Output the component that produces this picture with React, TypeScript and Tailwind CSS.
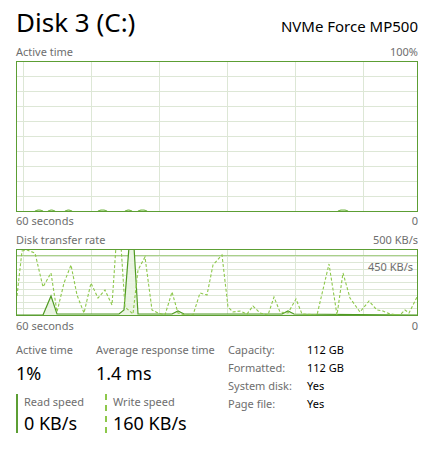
import React from "react"

const writeData: [number, number][] = [
  [17, 296], [22, 251], [27, 250], [35, 253], [43, 287], [51, 273], [57, 312], [64, 283],
  [71, 265], [77, 295], [84, 313], [91, 283], [98, 298], [105, 290], [112, 305], [116, 246],
  [121, 246], [125, 307], [133, 314], [138, 270], [145, 257], [152, 310], [158, 313], [165, 315],
  [172, 292], [178, 313], [185, 315], [193, 315], [200, 293], [207, 295], [213, 265], [222, 255],
  [228, 307], [233, 312], [240, 311], [247, 314], [253, 306], [260, 313], [268, 315], [274, 297],
  [280, 312], [288, 313], [296, 299], [302, 314], [317, 315], [329, 264], [337, 315], [343, 273],
  [350, 298], [360, 312], [369, 301], [377, 310], [383, 311], [390, 314], [400, 315], [405, 310],
  [409, 313], [417, 297],
]

const readData: [number, number][] = [
  [17, 315], [43, 315], [51, 296], [57, 314], [119, 314], [124, 310], [129, 247], [134, 247],
  [138, 314], [172, 314], [178, 311], [184, 314], [282, 314], [288, 311], [294, 314], [417, 315],
]

const activeBlips: [number, number][] = [
  [35, 43], [48, 55], [65, 72], [98, 107], [125, 132], [138, 147], [338, 348],
]

const vLines = [23, 91, 159, 227, 295, 363]

const pts = (d: [number, number][]) => d.map(([x, y]) => `${x},${y}`).join(" ")

function ActiveChart() {
  const hLines = Array.from({ length: 9 }, (_, i) => 61 + 15 * (i + 1))
  return (
    <div className="h-[151px] w-[402px] border border-[#5c9e34] bg-white">
      <svg viewBox="17 62 400 149" className="block h-full w-full" preserveAspectRatio="none">
        {hLines.map((y) => (
          <line key={y} x1={17} x2={417} y1={y + 0.5} y2={y + 0.5} stroke="#dde7d6" strokeWidth={1} />
        ))}
        {vLines.map((x) => (
          <line key={x} x1={x + 0.5} x2={x + 0.5} y1={62} y2={211} stroke="#dde7d6" strokeWidth={1} />
        ))}
        {activeBlips.map(([a, b]) => (
          <polyline
            key={a}
            points={`${a},211 ${a + 3},210 ${b - 3},210 ${b},211`}
            fill="#d7eac4"
            stroke="#77b84a"
            strokeWidth={1.2}
          />
        ))}
      </svg>
    </div>
  )
}

function TransferChart() {
  const hLines = Array.from({ length: 9 }, (_, i) => Math.round(249 + 6.6 * (i + 1)))
  return (
    <div className="relative h-[67px] w-[402px] border border-[#5c9e34] bg-white">
      <svg viewBox="17 250 400 65" className="block h-full w-full" preserveAspectRatio="none">
        {hLines.map((y) => (
          <line key={y} x1={17} x2={417} y1={y + 0.5} y2={y + 0.5} stroke="#dde7d6" strokeWidth={1} />
        ))}
        {vLines.map((x) => (
          <line key={x} x1={x + 0.5} x2={x + 0.5} y1={250} y2={315} stroke="#dde7d6" strokeWidth={1} />
        ))}
        <line x1={17} x2={417} y1={255.5} y2={255.5} stroke="#a9d08a" strokeWidth={1} />
        <polygon points={`${pts(readData)} 417,315 17,315`} fill="#eaf4e2" stroke="none" />
        <polyline points={pts(readData)} fill="none" stroke="#4f9a22" strokeWidth={1.2} />
        <polyline points={pts(writeData)} fill="none" stroke="#8dc84a" strokeWidth={1.1} strokeDasharray="3 2" />
      </svg>
      <span className="absolute right-[4px] top-[10px] text-[11px] leading-[14px] text-[#6e6e6e]">450 KB/s</span>
    </div>
  )
}

function Row({ left, right }: { left: string; right: string }) {
  return (
    <div className="flex h-[14px] w-[402px] items-center justify-between text-[11px] leading-[14px] text-[#6e6e6e]">
      <span>{left}</span>
      <span>{right}</span>
    </div>
  )
}

export default function App() {
  return (
    <div className="h-[474px] w-[440px] bg-white font-['Noto_Sans',sans-serif] text-black">
      <div className="ml-4 w-[402px]">
        <div className="flex h-[42px] items-end justify-between pb-[2px]">
          <span className="text-[26px] leading-[36px]">Disk 3 (C:)</span>
          <span className="mb-[4px] text-[15px] leading-[20px]">NVMe Force MP500</span>
        </div>

        <div className="mt-[3px]">
          <Row left="Active time" right="100%" />
        </div>
        <div className="mt-[2px]">
          <ActiveChart />
        </div>
        <div className="mt-[2px]">
          <Row left="60 seconds" right="0" />
        </div>

        <div className="mt-[5px]">
          <Row left="Disk transfer rate" right="500 KB/s" />
        </div>
        <div className="mt-[2px]">
          <TransferChart />
        </div>
        <div className="mt-[3px]">
          <Row left="60 seconds" right="0" />
        </div>

        <div className="mt-[10px] flex items-start">
          <div className="w-[212px]">
            <div className="flex">
              <div className="w-[80px]">
                <div className="text-[11px] leading-[14px] text-[#6e6e6e]">Active time</div>
                <div className="mt-[5px] text-[18px] leading-[22px]">1%</div>
              </div>
              <div>
                <div className="text-[11px] leading-[14px] text-[#6e6e6e]">Average response time</div>
                <div className="mt-[5px] text-[18px] leading-[22px]">1.4 ms</div>
              </div>
            </div>
            <div className="mt-[10px] flex">
              <div className="flex h-[39px] w-[89px]">
                <div className="w-[2px] bg-[#5c9e34]" />
                <div className="pl-[6px] pt-[1px]">
                  <div className="text-[11px] leading-[14px] text-[#6e6e6e]">Read speed</div>
                  <div className="mt-[3px] text-[18px] leading-[22px]">0 KB/s</div>
                </div>
              </div>
              <div className="flex h-[39px]">
                <div className="w-0 border-l-2 border-dashed border-[#8dc84a]" />
                <div className="pl-[6px] pt-[1px]">
                  <div className="text-[11px] leading-[14px] text-[#6e6e6e]">Write speed</div>
                  <div className="mt-[3px] text-[18px] leading-[22px]">160 KB/s</div>
                </div>
              </div>
            </div>
          </div>

          <div className="grid grid-cols-[79px_auto] content-start gap-y-[4px] text-[11px] leading-[14px]">
            <span className="text-[#6e6e6e]">Capacity:</span>
            <span>112 GB</span>
            <span className="text-[#6e6e6e]">Formatted:</span>
            <span>112 GB</span>
            <span className="text-[#6e6e6e]">System disk:</span>
            <span>Yes</span>
            <span className="text-[#6e6e6e]">Page file:</span>
            <span>Yes</span>
          </div>
        </div>
      </div>
    </div>
  )
}
